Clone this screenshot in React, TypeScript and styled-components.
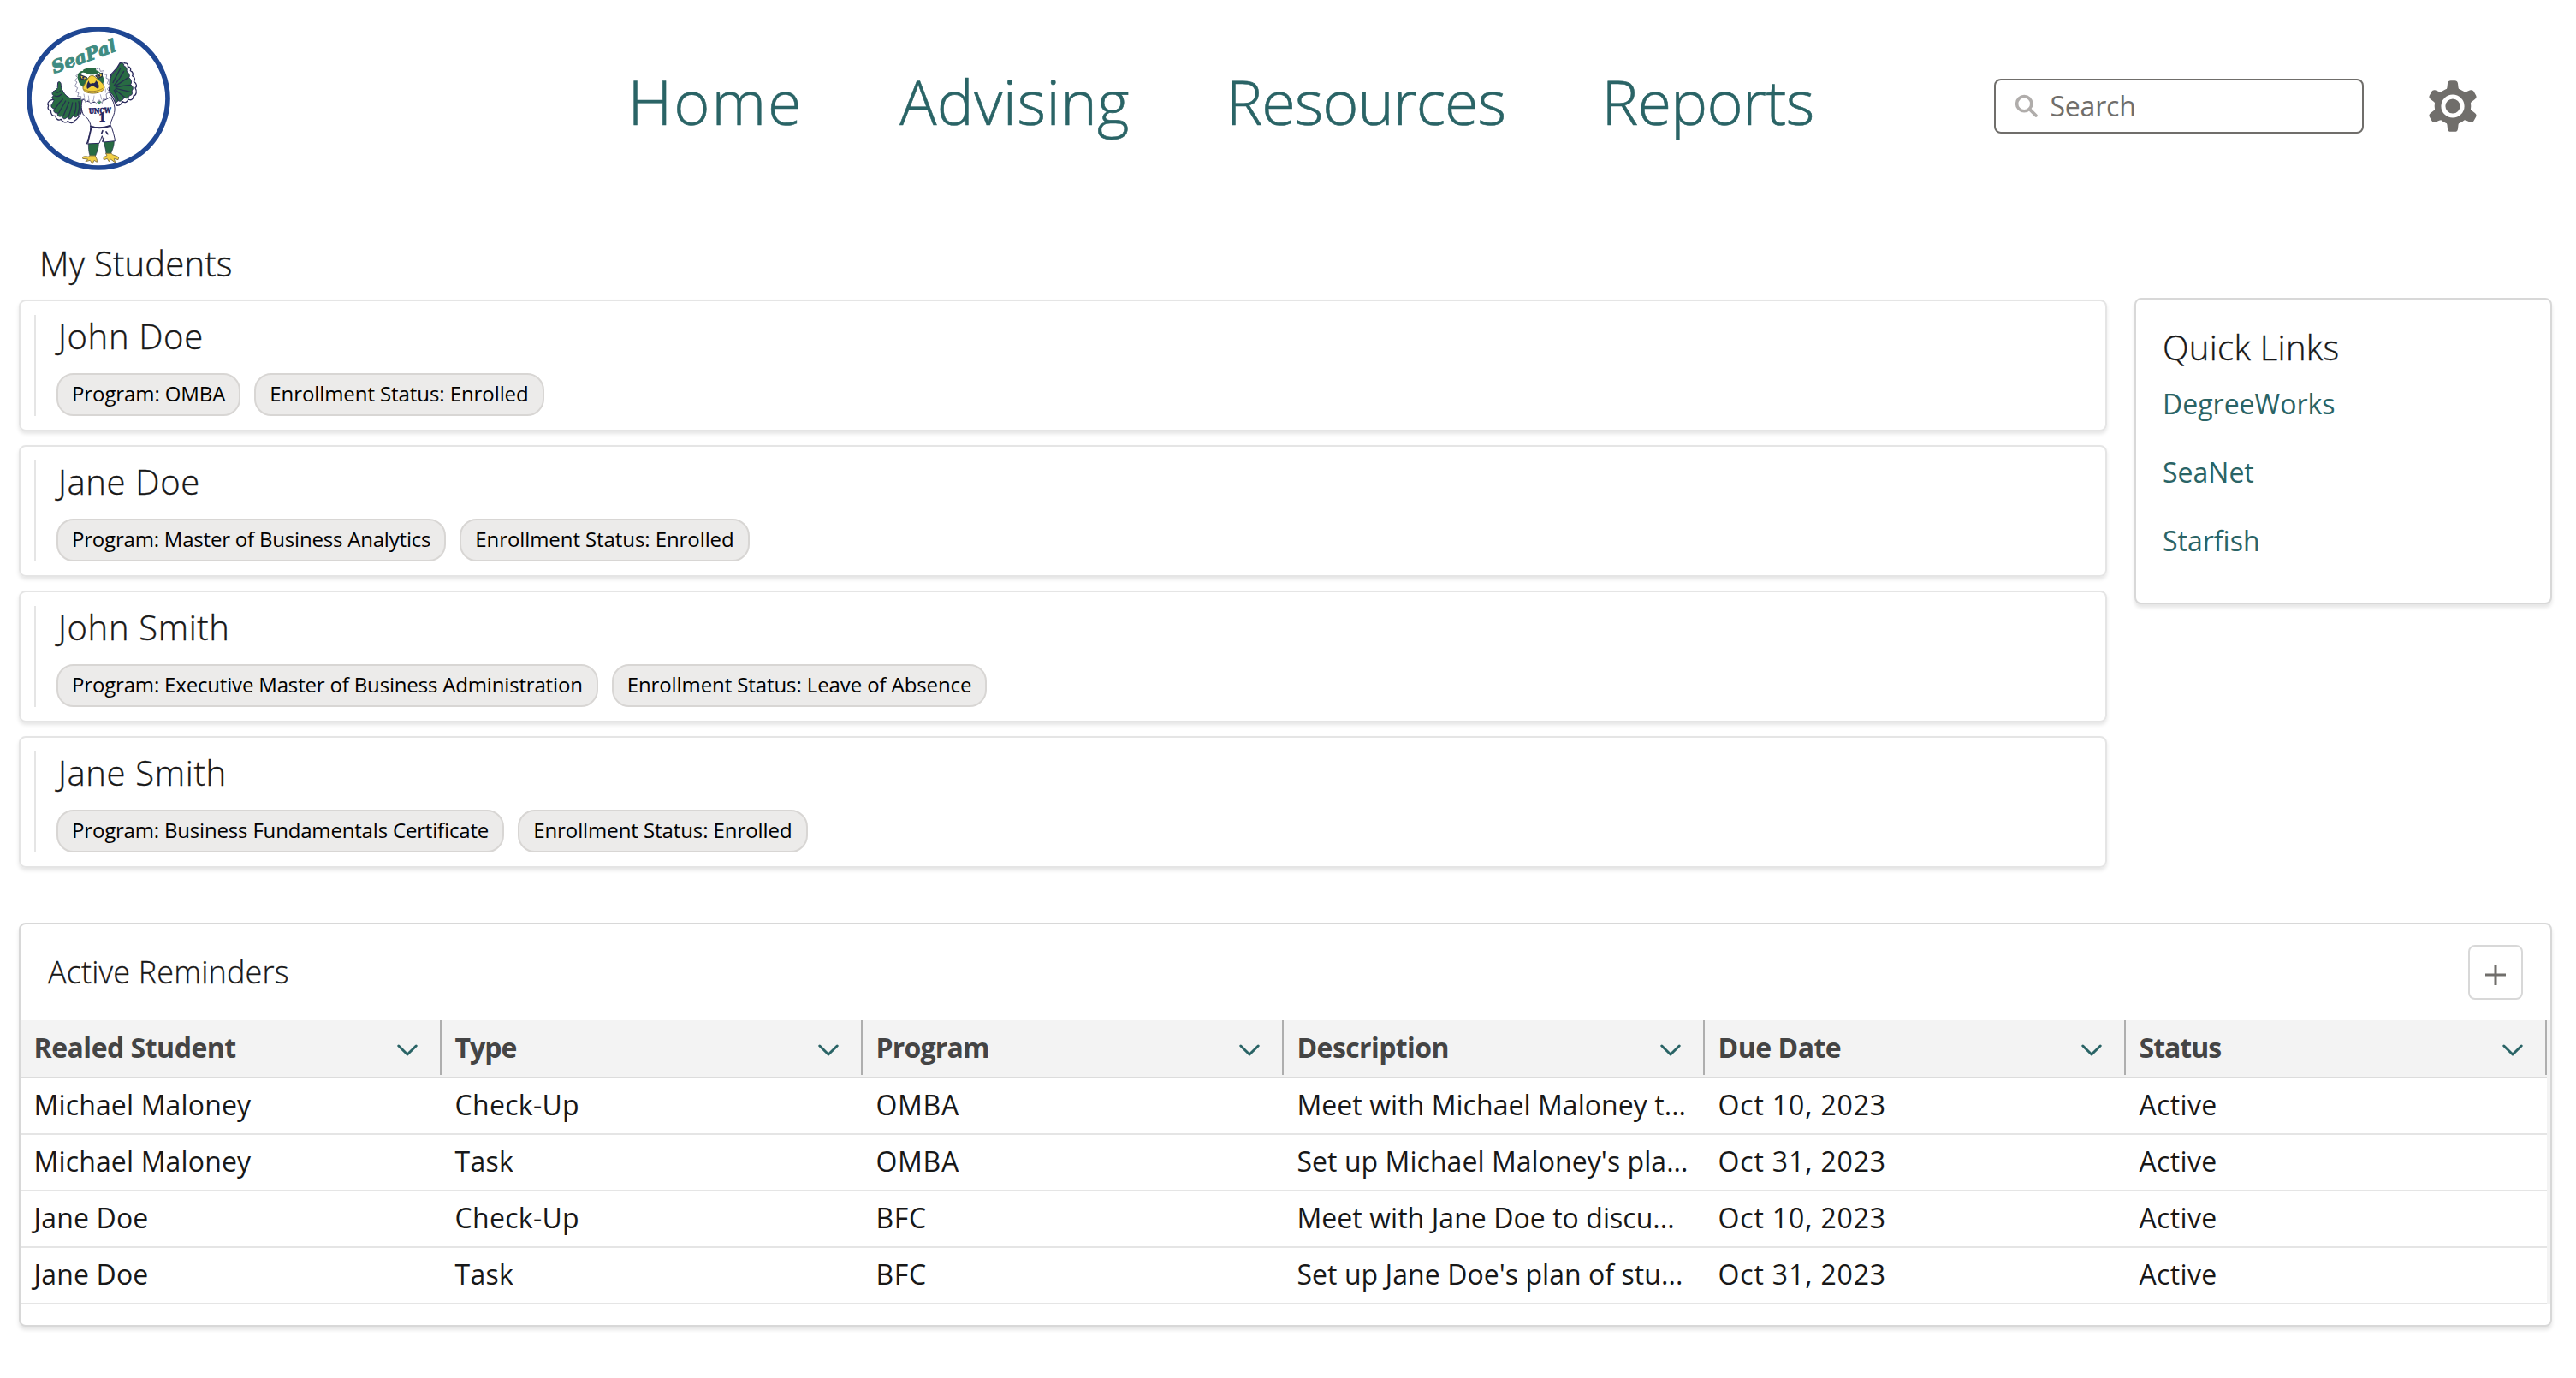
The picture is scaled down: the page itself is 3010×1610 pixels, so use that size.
import React from 'react';
import styled, { createGlobalStyle } from 'styled-components';

const teal = '#2a6466';
const ink = '#181818';
const grey = '#706e6b';

const GlobalStyle = createGlobalStyle`
  *, *::before, *::after { box-sizing: border-box; }
  body {
    margin: 0;
    background: #fff;
    color: ${ink};
    font-family: "Open Sans", "Noto Sans", sans-serif;
    font-size: 32px;
    font-feature-settings: "liga" 1;
  }
`;

const Page = styled.div`
  width: 3010px;
  height: 1610px;
  overflow: hidden;
`;

const Header = styled.header`
  display: flex;
  align-items: flex-start;
  height: 283px;
  padding: 31px 0 0 31px;
`;

const LogoLink = styled.a`
  display: block;
  width: 168px;
  height: 168px;
  flex: none;

  svg { display: block; }
`;

const Nav = styled.nav`
  display: flex;
  gap: 112.5px;
  width: 1596px;
  margin: 33px 0 0 534.5px;
`;

const NavItem = styled.a<{ $track: number }>`
  font-size: 72px;
  font-weight: 300;
  line-height: 108px;
  letter-spacing: ${p => p.$track}px;
  color: ${teal};
  -webkit-text-stroke: 0.6px ${teal};
  white-space: nowrap;
`;

const SearchBox = styled.label`
  display: flex;
  align-items: center;
  gap: 14px;
  width: 432px;
  height: 64px;
  margin-top: 61px;
  padding: 0 0 2px 22px;
  border: 2px solid ${grey};
  border-radius: 8px;
  color: ${grey};
  letter-spacing: -0.2px;

  svg { margin-top: 2px; }
`;

const GearButton = styled.button`
  display: block;
  margin: 61px 0 0 76.5px;
  padding: 0;
  border: 0;
  background: none;
  line-height: 0;
`;

const Columns = styled.div`
  display: grid;
  grid-template-columns: 2440px 488px;
  column-gap: 32px;
  padding-left: 22px;
`;

const SectionTitle = styled.h2<{ $track?: number }>`
  margin: 0;
  font-size: 40px;
  font-weight: 300;
  line-height: 50px;
  letter-spacing: ${p => p.$track ?? 0}px;
  -webkit-text-stroke: 0.35px ${ink};
`;

const Students = styled.section`
  display: flex;
  flex-direction: column;
  gap: 16px;

  > ${SectionTitle} { padding-left: 24px; margin-bottom: 1px; }
`;

const StudentCard = styled.article`
  height: 154px;
  padding: 16px;
  border: 2px solid #e5e5e5;
  border-radius: 8px;
  box-shadow: 0 3px 4px rgba(0, 0, 0, 0.1);
`;

const StudentBody = styled.div`
  height: 118px;
  padding-left: 24px;
  border-left: 2px solid #e5e5e5;
`;

const StudentName = styled.h3`
  margin: 0 0 20px;
  padding: 1px 0 0 2px;
  font-size: 40px;
  font-weight: 300;
  line-height: 47px;
  letter-spacing: 0.65px;
  -webkit-text-stroke: 0.35px ${ink};
`;

const Badges = styled.div`
  display: flex;
  gap: 16px;
`;

const Badge = styled.span<{ $track: number }>`
  height: 50px;
  padding: 0 16px;
  border: 2px solid #d8d6d4;
  border-radius: 20px;
  background: #ecebea;
  color: #000;
  font-size: 24px;
  line-height: 43px;
  letter-spacing: ${p => p.$track}px;
  white-space: nowrap;
`;

const Panel = styled.section`
  border: 2px solid #d8d8d8;
  border-radius: 8px;
  background: #fff;
  box-shadow: 0 4px 4px rgba(0, 0, 0, 0.1);
`;

const QuickLinks = styled(Panel)`
  align-self: start;
  height: 358px;
  margin-top: 65px;
  padding: 31px 0 0 31px;
`;

const LinkList = styled.div`
  display: flex;
  flex-direction: column;
  gap: 32px;
  margin-top: 17px;
`;

const QuickLink = styled.a`
  line-height: 48px;
  color: ${teal};
`;

const Reminders = styled(Panel)`
  width: 2960px;
  height: 472px;
  margin: 64px 0 0 22px;
`;

const RemindersHead = styled.div`
  display: flex;
  align-items: center;
  justify-content: space-between;
  height: 112px;
  padding: 0 32px;
`;

const RemindersTitle = styled.h2`
  margin: 0;
  font-size: 36px;
  font-weight: 300;
  line-height: 50px;
  letter-spacing: 0.17px;
  -webkit-text-stroke: 0.3px ${ink};
`;

const AddButton = styled.button`
  display: flex;
  align-items: center;
  justify-content: center;
  width: 64px;
  height: 64px;
  padding: 6px 0 0;
  border: 2px solid #d8d8d8;
  border-radius: 8px;
  background: #fff;
`;

const Table = styled.div`
  padding-right: 4px;
  background: #f3f3f3;
`;

const HeadRow = styled.div`
  display: grid;
  grid-template-columns: repeat(6, 492px);
  height: 68px;
  border-bottom: 2px solid #dcdcdc;
`;

const HeadCell = styled.div<{ $track: number }>`
  display: flex;
  align-items: center;
  justify-content: space-between;
  height: 64px;
  padding: 0 26px 0 15.5px;
  border-right: 2px solid #aeaeae;
  color: #444;
  font-weight: 700;
  line-height: 64px;
  letter-spacing: ${p => p.$track}px;

  svg { position: relative; top: 3px; }
`;

const Row = styled.div`
  display: grid;
  grid-template-columns: repeat(6, 492px);
  height: 66px;
  background: #fff;
  border-bottom: 2px solid #e5e5e5;
`;

const Cell = styled.div<{ $track: number }>`
  padding: 0 0 0 15.5px;
  line-height: 62px;
  letter-spacing: ${p => p.$track}px;
  white-space: nowrap;
`;

const navItems = [
  { label: 'Home', track: 2 },
  { label: 'Advising', track: 0.45 },
  { label: 'Resources', track: -1.05 },
  { label: 'Reports', track: -0.7 },
];

const enrolled = { text: 'Enrollment Status: Enrolled', track: -0.08 };

const students = [
  { name: 'John Doe', badges: [{ text: 'Program: OMBA', track: -0.1 }, enrolled] },
  { name: 'Jane Doe', badges: [{ text: 'Program: Master of Business Analytics', track: -0.2 }, enrolled] },
  {
    name: 'John Smith',
    badges: [
      { text: 'Program: Executive Master of Business Administration', track: -0.17 },
      { text: 'Enrollment Status: Leave of Absence', track: -0.1 },
    ],
  },
  { name: 'Jane Smith', badges: [{ text: 'Program: Business Fundamentals Certificate', track: -0.18 }, enrolled] },
];

const links = ['DegreeWorks', 'SeaNet', 'Starfish'];

const columns = [
  { label: 'Realed Student', head: -0.5, body: 0.15 },
  { label: 'Type', head: -1, body: 0.3 },
  { label: 'Program', head: -0.8, body: 0.7 },
  { label: 'Description', head: -0.6, body: 0.05 },
  { label: 'Due Date', head: -0.5, body: 0.85 },
  { label: 'Status', head: -1, body: 0.35 },
];

const rows = [
  ['Michael Maloney', 'Check-Up', 'OMBA', 'Meet with Michael Maloney t...', 'Oct 10, 2023', 'Active'],
  ['Michael Maloney', 'Task', 'OMBA', "Set up Michael Maloney's pla...", 'Oct 31, 2023', 'Active'],
  ['Jane Doe', 'Check-Up', 'BFC', 'Meet with Jane Doe to discu...', 'Oct 10, 2023', 'Active'],
  ['Jane Doe', 'Task', 'BFC', "Set up Jane Doe's plan of stu...", 'Oct 31, 2023', 'Active'],
];

const Logo = () => (
  <svg width="168" height="168" viewBox="33 33 504 504" role="img" aria-label="SeaPal">
    <circle cx="285" cy="285" r="243" fill="#fff" stroke="#1f4793" strokeWidth="17" />
    <text
      transform="translate(130 198) rotate(-20)"
      fontFamily='"DejaVu Serif", serif'
      fontWeight="700"
      fontStyle="italic"
      fontSize="62"
      textLength="236"
      lengthAdjust="spacingAndGlyphs"
      fill="#3f8c82"
      stroke="#3f8c82"
      strokeWidth="3"
    >
      SeaPal
    </text>
    <g strokeLinejoin="round" strokeLinecap="round">
      {/* raised wing */}
      <path
        d="M322 262 C326 238 322 214 330 200 C338 190 350 182 356 168 C360 158 372 154 378 162 C384 160 390 166 388 174 C396 174 400 182 397 188 C406 192 408 200 404 206 C414 212 414 220 409 226 C420 234 421 244 414 248 C421 260 418 274 408 276 C408 286 400 294 390 288 C386 298 378 302 370 296 C364 308 352 314 346 306 C342 292 332 276 322 262 Z"
        fill="#fff" stroke="#2b2a5c" strokeWidth="4"
      />
      <path
        d="M323 260 C328 238 323 216 332 202 C342 190 352 182 358 166 C366 156 376 162 374 172 C384 174 386 182 384 190 C394 198 396 206 392 212 C402 220 402 230 398 236 C408 244 408 252 402 258 C406 268 402 276 394 274 C392 284 382 288 376 280 C370 294 360 298 354 292 C350 302 344 300 344 290 C340 278 332 268 323 260 Z"
        fill="#286b43" stroke="#2b2a5c" strokeWidth="3"
      />
      <path
        d="M340 240 C352 226 364 208 374 190 M344 242 C360 232 376 220 390 212 M346 246 C364 242 382 238 398 238 M346 250 C364 254 380 258 396 262 M344 254 C356 264 368 274 378 282 M340 256 C346 270 352 282 354 292 M336 230 C344 212 354 196 362 180"
        fill="none" stroke="#25324f" strokeWidth="4"
      />
      {/* lowered wing with pointing feather */}
      <path
        d="M122 290 C110 294 104 302 110 310 C106 320 110 328 118 328 C118 340 124 348 134 346 C136 358 146 364 154 358 C160 370 172 372 178 364 C186 374 198 372 200 364 C212 358 226 340 228 320 L222 286 Z"
        fill="#fff" stroke="#2b2a5c" strokeWidth="4"
      />
      <path
        d="M144 228 C150 224 154 230 154 238 C154 250 160 260 166 268 C178 286 204 292 226 284 C230 306 226 330 214 344 C206 354 198 350 196 344 C192 358 180 362 176 350 C168 360 158 358 158 346 C148 352 140 346 142 336 C130 338 126 330 130 320 C120 320 116 310 124 302 C128 294 132 290 126 288 C120 284 122 278 128 276 C120 270 122 260 132 258 C138 250 144 252 142 244 Z"
        fill="#286b43" stroke="#2b2a5c" strokeWidth="3"
      />
      <path
        d="M160 288 C150 296 142 308 134 320 M170 294 C162 308 154 322 146 336 M182 298 C176 314 168 332 162 346 M194 300 C192 316 186 332 180 350 M206 300 C208 318 204 334 198 346 M216 296 C220 312 218 326 212 342 M132 276 C140 280 150 276 156 270 M134 262 C142 266 148 264 152 258"
        fill="none" stroke="#25324f" strokeWidth="4"
      />
      {/* legs and feet */}
      <path d="M250 440 C262 434 276 434 286 442 C286 460 280 474 274 488 L256 488 C250 472 250 456 250 440 Z" fill="#286b43" stroke="#25324f" strokeWidth="2" />
      <path d="M304 438 C316 428 330 428 340 436 C340 452 334 466 328 480 L312 480 C312 464 306 452 304 438 Z" fill="#286b43" stroke="#25324f" strokeWidth="2" />
      <path
        d="M254 486 L274 486 C276 494 282 498 280 508 L270 502 L264 514 L256 502 L240 506 L248 498 L230 496 C228 488 238 486 250 490 Z"
        fill="#f2cf45" stroke="#8b7a45" strokeWidth="3"
      />
      <path
        d="M312 478 L330 478 C334 486 350 484 356 492 L354 500 L340 496 L344 510 L328 498 L322 506 L316 496 L304 500 C300 492 308 488 314 486 Z"
        fill="#f2cf45" stroke="#8b7a45" strokeWidth="3"
      />
      {/* shorts */}
      <path d="M258 382 C280 390 306 388 328 380 C336 396 340 416 344 434 L304 438 L298 416 L288 442 L244 444 C250 424 258 404 258 382 Z" fill="#fff" stroke="#2b2a5c" strokeWidth="3" />
      <path d="M260 388 L248 440 M300 398 L296 408 M304 424 L300 436 M312 402 L318 410" fill="none" stroke="#2b2a5c" strokeWidth="5" />
      {/* jersey */}
      <path d="M230 288 C222 308 226 328 232 342 C244 350 256 364 258 382 C280 390 306 388 326 380 C330 356 344 342 342 318 C340 302 336 292 326 280 C300 300 258 306 230 288 Z" fill="#fff" stroke="#2b2a5c" strokeWidth="3" />
      <path d="M258 383 C280 390 306 388 326 381" fill="none" stroke="#2b2a5c" strokeWidth="6" />
      {/* head */}
      <path
        d="M216 198 L206 206 L212 212 L202 222 L210 228 L202 242 L212 248 L206 262 L216 266 L212 278 L224 278 L224 290 L236 286 L240 300 L250 290 L258 304 L266 292 L278 302 L288 290 L298 302 L302 286 L314 284 L312 270 L324 262 L316 252 L326 240 L316 232 L322 218 L312 214 L314 202 L304 200 L304 188 L292 190 L288 178 L276 184 Z"
        fill="#fff" stroke="#7c7c9e" strokeWidth="2.5"
      />
      <path d="M212 206 C214 192 226 186 236 190 L276 186 C292 190 304 206 304 222 L300 242 L286 232 L234 246 C220 240 212 224 212 206 Z" fill="#286b43" />
      <path d="M222 200 C230 190 240 196 250 200 C262 204 276 202 286 194 L296 204 L280 214 L236 214 Z" fill="#fff" />
      <path d="M230 186 C242 176 264 176 276 180 C278 194 264 202 250 198 C240 196 232 192 230 186 Z" fill="#286b43" />
      <path d="M220 202 L244 212 L238 220 L224 216 Z M276 206 L298 196 L298 208 L284 214 Z" fill="#f2cf45" stroke="#27354a" strokeWidth="4" />
      <circle cx="232" cy="212" r="3.5" fill="#252550" />
      <circle cx="288" cy="206" r="3.5" fill="#252550" />
      <path d="M254 208 C262 202 272 206 280 216 C292 226 306 236 306 248 C302 264 272 270 254 266 C236 264 228 254 232 242 C240 234 244 218 254 208 Z" fill="#f4d23d" stroke="#8b7535" strokeWidth="3" />
      <path d="M252 222 C244 232 242 244 246 252 L264 240 L284 252 C290 244 286 230 276 222 C276 230 268 234 264 230 C258 236 252 234 252 222 Z" fill="#252550" />
      <path d="M236 254 C250 264 284 262 300 250" fill="none" stroke="#a58732" strokeWidth="3" />
      <path d="M280 296 L296 296 L288 307 Z" fill="#3f8c62" />
      <path d="M234 270 L236 280 M250 276 L252 292 M270 276 L268 290 M292 272 L296 288 M310 252 L310 264" fill="none" stroke="#9c9cb8" strokeWidth="2.5" />
    </g>
    <g fontFamily='"DejaVu Serif", serif' fontWeight="700" fill="#252560" stroke="#252560" strokeWidth="2">
      <text transform="translate(252 338) rotate(-2)" fontSize="25" textLength="78" lengthAdjust="spacingAndGlyphs">UNCW</text>
      <text x="286" y="365" fontSize="36">1</text>
    </g>
  </svg>
);

const SearchIcon = () => (
  <svg width="28" height="28" viewBox="0 0 28 28" fill="none" stroke="#b0adab">
    <circle cx="11.2" cy="11.2" r="8.6" strokeWidth="3.6" />
    <path d="M17.6 17.6 L25 25" strokeWidth="3.8" strokeLinecap="round" />
  </svg>
);

const toothAngles = [0, 60, 120, 180, 240, 300];

const GearIcon = () => (
  <svg width="56" height="64" viewBox="-28 -32 56 64">
    <g fill={grey}>
      <circle r="21.3" />
      {toothAngles.map(a => (
        <path
          key={a}
          transform={`rotate(${a})`}
          d="M-10.5 -17.5 C-7.5 -18.8 -6.7 -20 -6.5 -22 L-6 -26.4 C-5.6 -29 -4.3 -29.8 -2.4 -29.8 L2.4 -29.8 C4.3 -29.8 5.6 -29 6 -26.4 L6.5 -22 C6.7 -20 7.5 -18.8 10.5 -17.5 Z"
        />
      ))}
    </g>
    <circle r="11.1" fill={grey} stroke="#fff" strokeWidth="5" />
  </svg>
);

const Chevron = () => (
  <svg width="24" height="14" viewBox="0 0 24 14" fill="none" stroke={teal} strokeWidth="3" strokeLinecap="round" strokeLinejoin="round">
    <path d="M1.8 2 L12 12 L22.2 2" />
  </svg>
);

const PlusIcon = () => (
  <svg width="24" height="24" viewBox="0 0 24 24" stroke={grey} strokeWidth="3">
    <path d="M12 0 V24 M0 12 H24" />
  </svg>
);

export default function App() {
  return (
    <Page>
      <GlobalStyle />
      <Header>
        <LogoLink><Logo /></LogoLink>
        <Nav>
          {navItems.map(n => <NavItem key={n.label} $track={n.track}>{n.label}</NavItem>)}
        </Nav>
        <SearchBox>
          <SearchIcon />
          Search
        </SearchBox>
        <GearButton aria-label="Settings"><GearIcon /></GearButton>
      </Header>

      <Columns>
        <Students>
          <SectionTitle $track={0.2}>My Students</SectionTitle>
          {students.map(s => (
            <StudentCard key={s.name}>
              <StudentBody>
                <StudentName>{s.name}</StudentName>
                <Badges>
                  {s.badges.map(b => <Badge key={b.text} $track={b.track}>{b.text}</Badge>)}
                </Badges>
              </StudentBody>
            </StudentCard>
          ))}
        </Students>
        <QuickLinks>
          <SectionTitle $track={0.3}>Quick Links</SectionTitle>
          <LinkList>
            {links.map(l => <QuickLink key={l}>{l}</QuickLink>)}
          </LinkList>
        </QuickLinks>
      </Columns>

      <Reminders>
        <RemindersHead>
          <RemindersTitle>Active Reminders</RemindersTitle>
          <AddButton aria-label="Add reminder"><PlusIcon /></AddButton>
        </RemindersHead>
        <Table>
          <HeadRow>
            {columns.map(c => (
              <HeadCell key={c.label} $track={c.head}>
                {c.label}
                <Chevron />
              </HeadCell>
            ))}
          </HeadRow>
          {rows.map((r, i) => (
            <Row key={i}>
              {r.map((text, j) => <Cell key={j} $track={columns[j].body}>{text}</Cell>)}
            </Row>
          ))}
        </Table>
      </Reminders>
    </Page>
  );
}
